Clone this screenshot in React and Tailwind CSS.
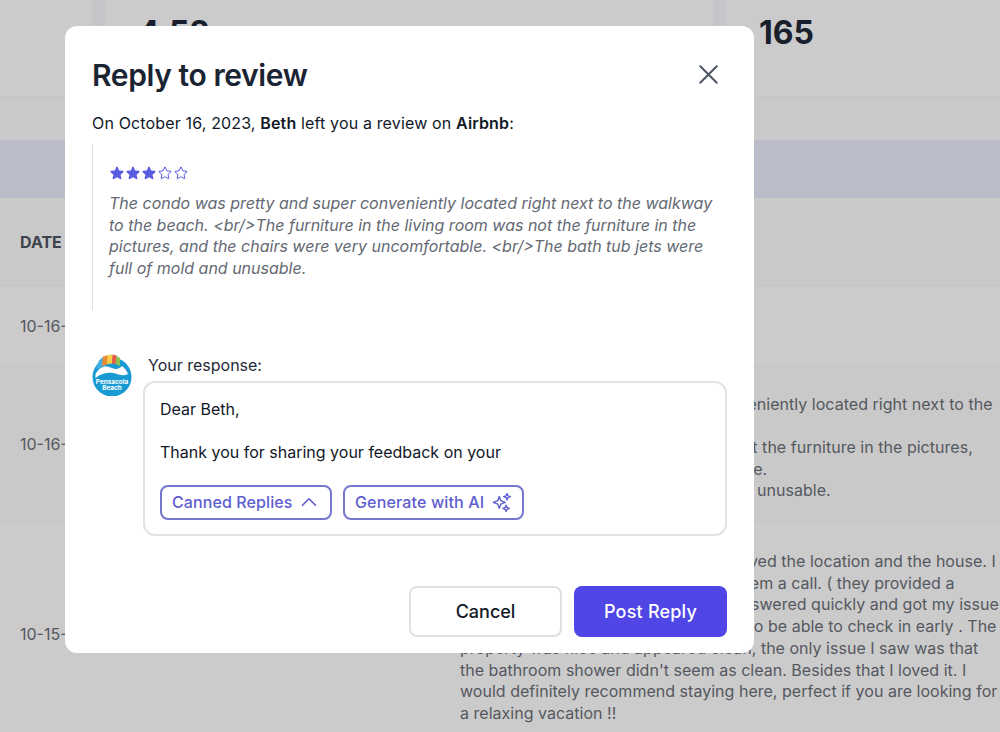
import React from "react";
import { HiStar, HiOutlineStar } from "react-icons/hi2";
import { ChevronUp, X } from "lucide-react";

const font = { fontFamily: "Inter, 'Liberation Sans', sans-serif" };

function Logo() {
  return (
    <svg width="42" height="42" viewBox="0 0 42 42" className="shrink-0">
      <circle cx="21" cy="23" r="19.5" fill="#1a9ad2" />
      <path d="M5 15 L8 6.5 L12 3 L15 12 Z" fill="#45aee0" />
      <path d="M11 12 L12 2.5 L17 1 L17.5 10 Z" fill="#ee8a36" />
      <path d="M16 10 L16.5 1 L21.5 0.5 L21.5 9.5 Z" fill="#f4cf4a" />
      <path d="M21 9.5 L21.5 0.5 L25.5 1.5 L25 10 Z" fill="#e8574a" />
      <path d="M24.5 10 L25.5 1.5 L29 4 L29 12 Z" fill="#8cc152" />
      <path d="M4.5 20 C9 12 15 11 21 14 C25 16 28 15 31 12 C34 14 36 17 37 20 C33 22 29 21 26 20 C20 18 12 18 4.5 24 Z" fill="#ffffff" />
      <text x="21" y="29.5" textAnchor="middle" fontSize="6.4" fontWeight="700" fill="#ffffff" style={font}>Pensacola</text>
      <text x="21" y="35.5" textAnchor="middle" fontSize="6.4" fontWeight="700" fill="#ffffff" style={font}>Beach</text>
    </svg>
  );
}

function Sparkle() {
  return (
    <svg width="20" height="20" viewBox="0 0 22 22" fill="none" stroke="currentColor" strokeWidth="1.5" strokeLinejoin="round" className="shrink-0">
      <path d="M8 5 L9.7 9.6 L14.5 11.5 L9.7 13.4 L8 18 L6.3 13.4 L1.5 11.5 L6.3 9.6 Z" />
      <path d="M16.5 1.5 L17.5 4.2 L20.2 5.2 L17.5 6.2 L16.5 8.9 L15.5 6.2 L12.8 5.2 L15.5 4.2 Z" />
      <path d="M15.5 14.5 L16.5 17 L19 18 L16.5 19 L15.5 21.5 L14.5 19 L12 18 L14.5 17 Z" />
    </svg>
  );
}

function Background() {
  return (
    <div className="flex flex-col w-[1000px] h-[732px] overflow-hidden bg-[#cbcbcb] text-[#55585f]">
      <div className="flex h-[97px] shrink-0 border-b border-[#c4c4c4]">
        <div className="w-[92px]" />
        <div className="w-[13px] bg-[#c5c6c9]" />
        <div className="w-[608px] pl-[33px] pt-[15px]">
          <span className="text-[32px] leading-9 font-bold text-[#191f2c]">4.52</span>
        </div>
        <div className="w-[13px] bg-[#c5c6c9]" />
        <div className="flex-1 pl-[33px] pt-[15px]">
          <span className="text-[32px] leading-9 font-bold text-[#191f2c]">165</span>
        </div>
      </div>
      <div className="h-[43px] shrink-0 bg-[#c9c9c9]" />
      <div className="h-[58px] shrink-0 bg-[#babcc9]" />
      <div className="h-[88px] shrink-0 flex items-center pl-5 border-b border-[#c4c4c4] bg-[#c9c9c9]">
        <span className="text-base font-bold text-[#3f434b]">DATE</span>
      </div>
      <div className="h-[79px] shrink-0 flex items-center pl-5 pt-[2px] border-b border-[#c4c4c4]">
        <span className="text-base">10-16-2023</span>
      </div>
      <div className="h-[157px] shrink-0 flex items-center border-b border-[#c4c4c4] bg-[#c9c9c9]">
        <span className="w-[460px] pl-5 pt-[2px] text-base">10-16-2023</span>
        <div className="w-[540px] pt-[10px] text-base leading-[21.6px] tracking-[0.03px] whitespace-nowrap">
          <div>The condo was pretty and super conveniently located right next to the</div>
          <div>walkway to the beach.</div>
          <div>The furniture in the living room was not the furniture in the pictures,</div>
          <div>and the chairs were very uncomfortable.</div>
          <div>The bath tub jets were full of mold and unusable.</div>
        </div>
      </div>
      <div className="flex-1 flex pt-[29px]">
        <span className="w-[460px] pl-5 pt-[71px] text-base">10-15-2023</span>
        <div className="w-[540px] text-base leading-[21.7px] tracking-[0.02px] whitespace-nowrap">
          <div>Great place to stay at, and we really loved the location and the house. I</div>
          <div>had a problem at check-in so I gave them a call. ( they provided a</div>
          <div>phone number to reach them) They answered quickly and got my issue</div>
          <div>resolved, we were all also very happy to be able to check in early . The</div>
          <div>property was nice and appeared clean, the only issue I saw was that</div>
          <div>the bathroom shower didn't seem as clean. Besides that I loved it. I</div>
          <div>would definitely recommend staying here, perfect if you are looking for</div>
          <div>a relaxing vacation !!</div>
        </div>
      </div>
    </div>
  );
}

export default function App() {
  return (
    <div className="relative w-[1000px] h-[732px] overflow-hidden" style={font}>
      <Background />
      <div className="absolute left-[65px] top-[26px] w-[689px] h-[627px] rounded-xl bg-white px-[27px] pt-[29px] flex flex-col">
        <div className="flex items-center justify-between h-10">
          <h2 className="text-[30px] leading-10 font-semibold tracking-[-0.4px] text-[#1b2433]">Reply to review</h2>
          <X size={33} strokeWidth={1.45} className="text-[#4b5563] mt-[-2px] mr-[2px]" />
        </div>
        <p className="mt-[16px] text-base leading-6 tracking-[0.15px] text-[#111827]">
          On October 16, 2023, <b className="font-semibold">Beth</b> left you a review on <b className="font-semibold">Airbnb</b>:
        </p>
        <div className="mt-[9px] h-[166px] border-l border-[#dfe0e3] pl-[16px] pt-[21px]">
          <div className="flex h-4 items-center text-[#5a5ce0]">
            <HiStar size={16} /><HiStar size={16} /><HiStar size={16} /><HiOutlineStar size={16} /><HiOutlineStar size={16} />
          </div>
          <p className="mt-[12px] w-[610px] text-base leading-[21.7px] italic text-[#646973]">
            The condo was pretty and super conveniently located right next to the walkway to the beach. &lt;br/&gt;The furniture in the living room was not the furniture in the pictures, and the chairs were very uncomfortable. &lt;br/&gt;The bath tub jets were full of mold and unusable.
          </p>
        </div>
        <div className="mt-[43px] flex">
          <div className="pt-[1px] ml-[-1px]"><Logo /></div>
          <div className="ml-[10px] flex-1">
            <div className="ml-[5px] text-base leading-6 text-[#1f2937]">Your response:</div>
            <div className="mt-[4px] h-[155px] rounded-xl border-2 border-[#e2e2e6] px-[15px] pt-[16px]">
              <div className="text-base leading-[21.6px] text-[#111827]">Dear Beth,</div>
              <div className="mt-[21.6px] text-base leading-[21.6px] text-[#111827]">Thank you for sharing your feedback on your</div>
              <div className="mt-[21px] flex gap-[11px] text-[#5d5dd0]">
                <div className="flex h-[35px] w-[172px] items-center justify-between rounded-lg border-2 border-[#7675cf] pl-[10px] pr-[8px] text-base tracking-[0.1px] font-medium">
                  Canned Replies <ChevronUp size={26} strokeWidth={1.5} />
                </div>
                <div className="flex h-[35px] w-[181px] items-center justify-between rounded-lg border-2 border-[#7675cf] pl-[10px] pr-[10px] text-base tracking-[0.15px] font-medium">
                  Generate with AI <Sparkle />
                </div>
              </div>
            </div>
          </div>
        </div>
        <div className="mt-[50px] flex justify-end gap-[12px]">
          <div className="flex h-[51px] w-[153px] items-center justify-center rounded-lg border-2 border-[#dfe0e3] text-lg font-medium text-[#111827]">Cancel</div>
          <div className="flex h-[51px] w-[153px] items-center justify-center rounded-lg bg-[#4f46e5] text-lg tracking-[0.2px] font-medium text-white">Post Reply</div>
        </div>
      </div>
    </div>
  );
}
